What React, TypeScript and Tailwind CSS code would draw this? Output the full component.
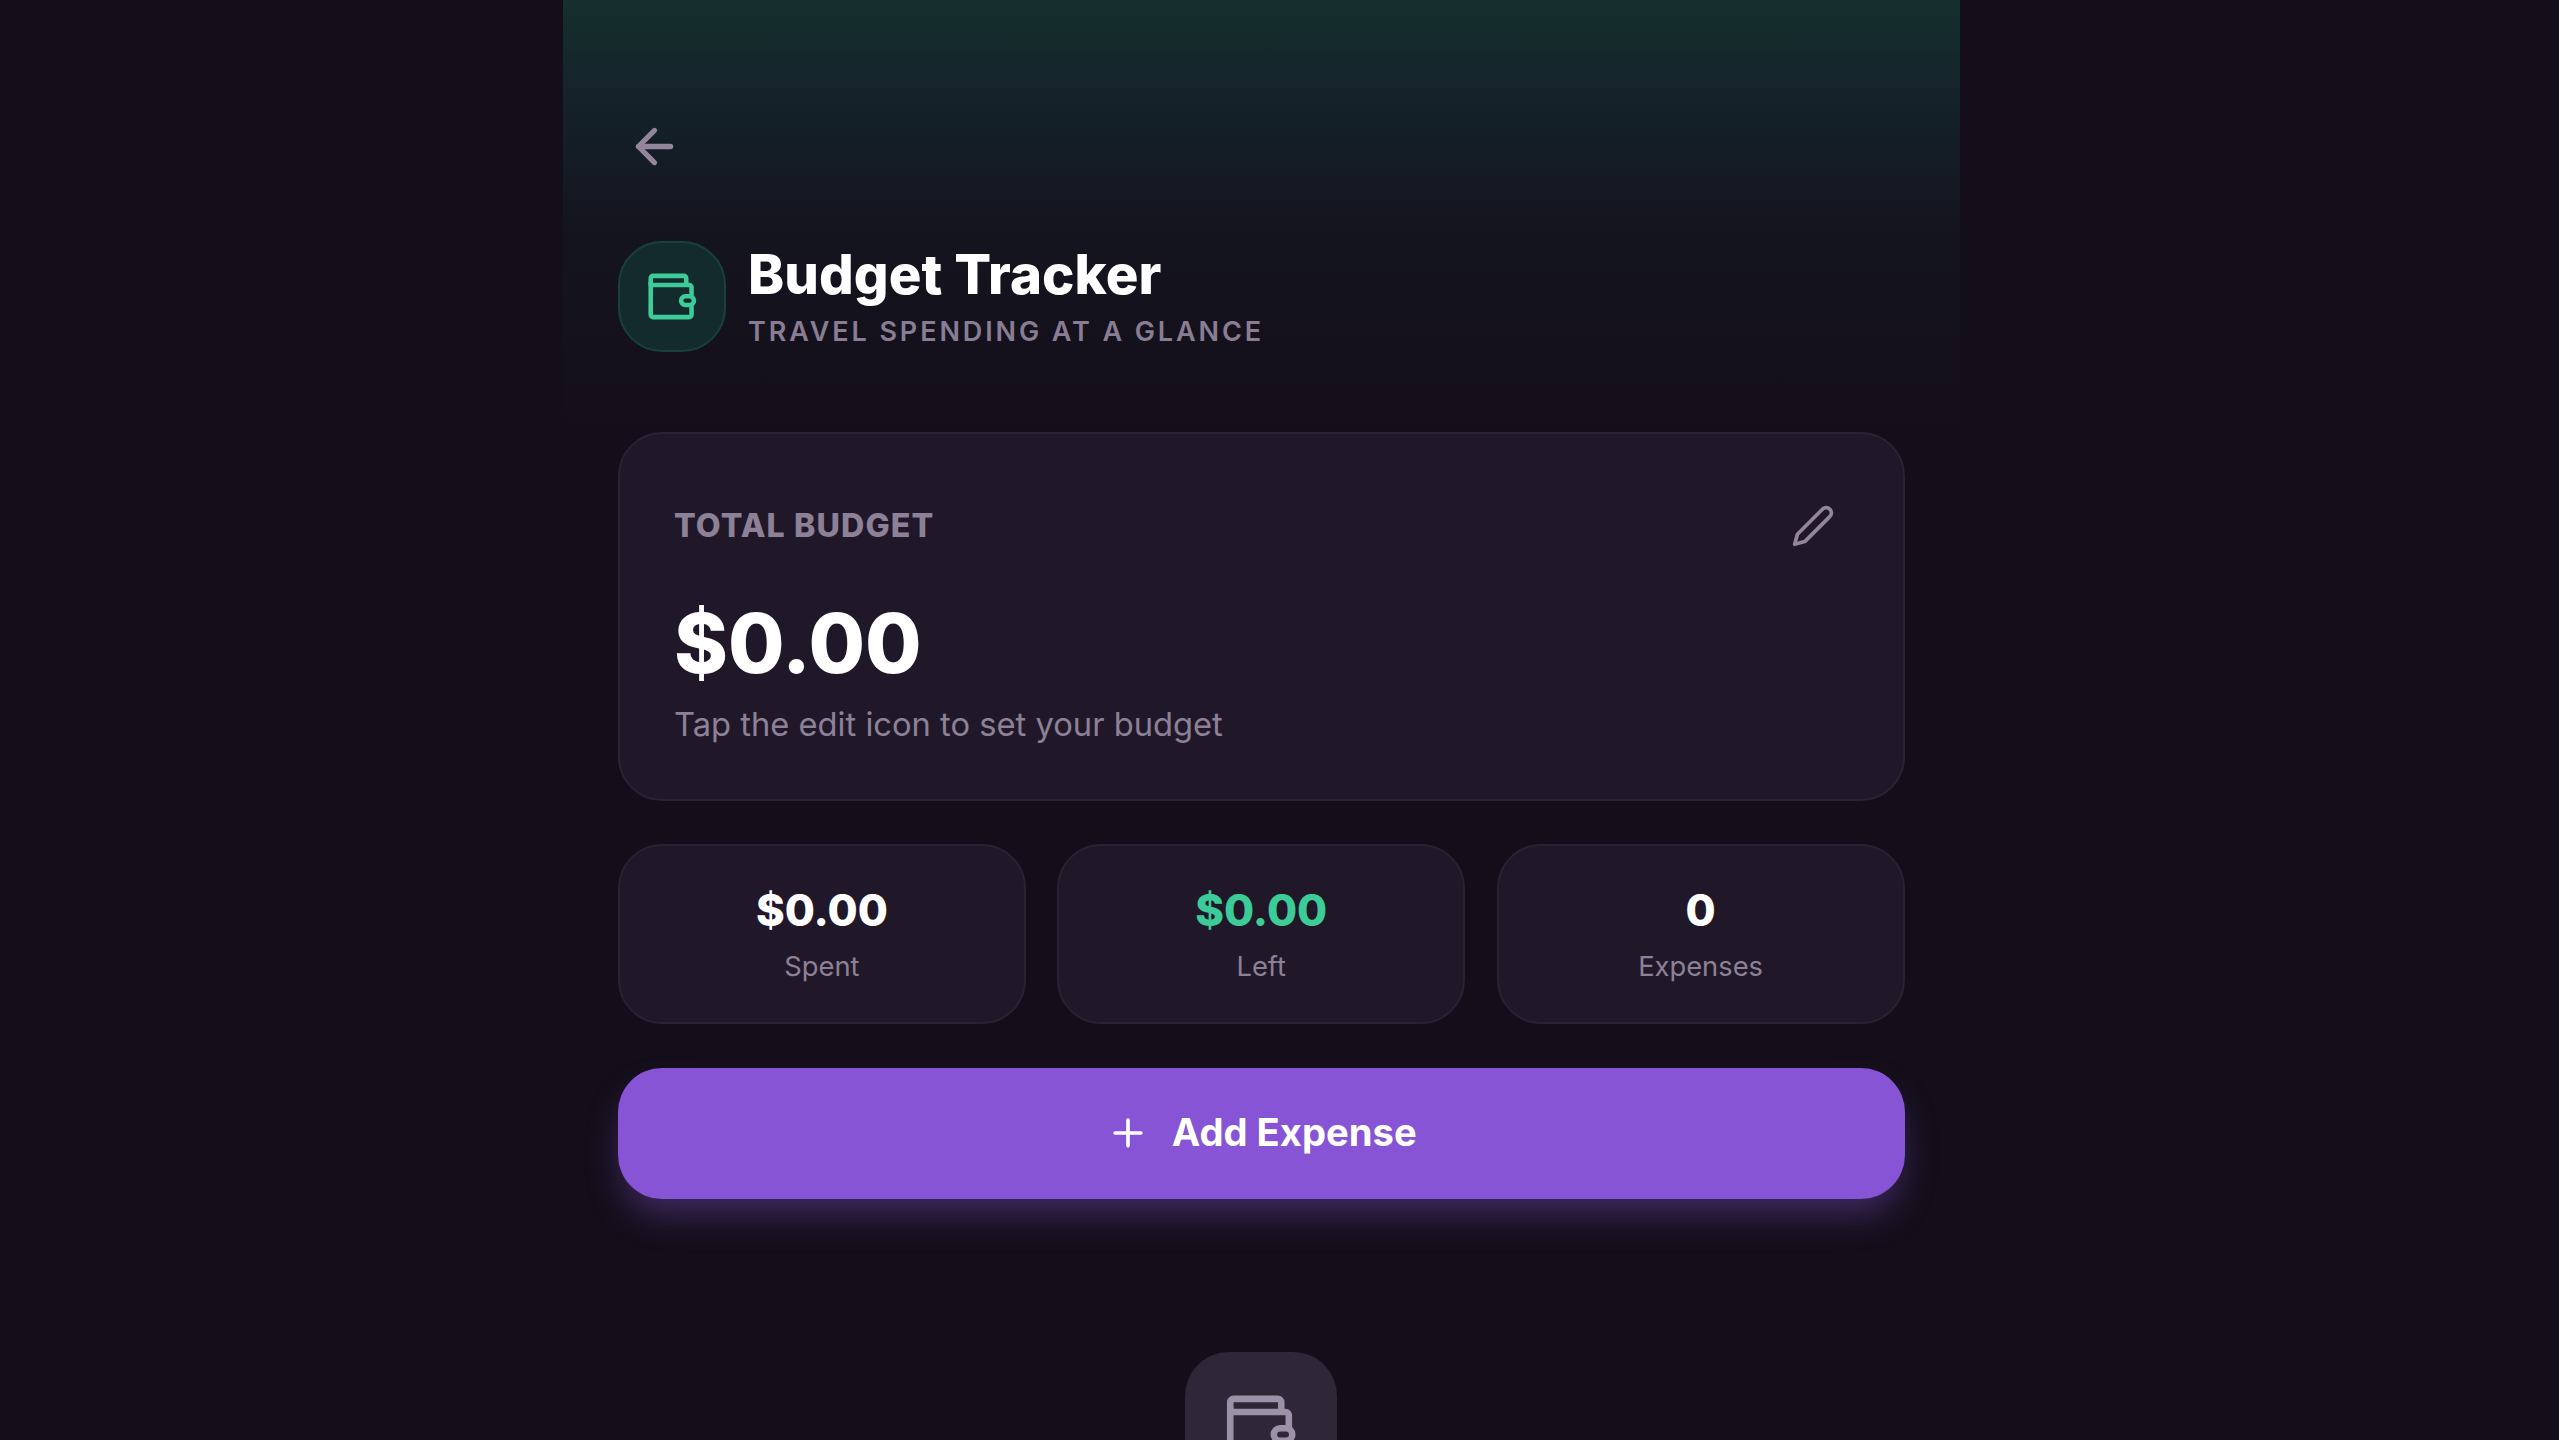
import React from 'react';
import { ArrowLeft, Plus } from 'lucide-react';

interface IconProps {
  className?: string;
}

interface Stat {
  label: string;
  value: string;
  color: string;
}

const stats: Stat[] = [
  { label: 'Spent', value: '$0.00', color: 'text-white' },
  { label: 'Left', value: '$0.00', color: 'text-[#3dcb98]' },
  { label: 'Expenses', value: '0', color: 'text-white' },
];

const WalletIcon: React.FC<IconProps> = ({ className }) => (
  <svg className={className} viewBox="0 0 24 24" fill="none" stroke="currentColor" strokeWidth="2" strokeLinecap="round" strokeLinejoin="round">
    <path d="M18 7V4a1 1 0 0 0-1-1H3.5a1 1 0 0 0-1 1v3h16.8a1 1 0 0 1 1 1v3.9" />
    <path d="M2.5 6v14a1 1 0 0 0 1 1h15.8a1 1 0 0 0 1-1v-4.3" />
    <rect x="15.75" y="11.9" width="5.6" height="3.8" rx="1.9" />
  </svg>
);

const PencilIcon: React.FC<IconProps> = ({ className }) => (
  <svg className={className} viewBox="0 0 24 24" fill="none" stroke="currentColor" strokeWidth="2" strokeLinecap="round" strokeLinejoin="round">
    <path d="M17 3a2.85 2.83 0 1 1 4 4L7.5 20.5 2 22l1.5-5.5Z" />
  </svg>
);

const App: React.FC = () => {
  return (
    <div className="h-screen w-full overflow-hidden bg-[#140e1a] font-['Inter',sans-serif] text-white">
      <div className="ml-[563px] w-[1396.5px] h-full px-[55px] bg-[linear-gradient(to_bottom,#14302d_0px,#14222a_100px,#14151f_220px,#140e1a_430px)]">
        {/* Header */}
        <header className="pt-[120px]">
          <button className="flex w-[73px] h-[52px] items-center justify-center text-[#92859c]">
            <ArrowLeft className="w-[55px] h-[55px]" strokeWidth={2.3} />
          </button>
          <div className="mt-[69px] flex items-center gap-[22px]">
            <div className="flex w-[108px] h-[111px] items-center justify-center rounded-[44px] border-2 border-[#1a403c] bg-[#132b2c]">
              <WalletIcon className="w-[55px] h-[55px] text-[#3dcb98]" />
            </div>
            <div className="pt-[2px]">
              <h1 className="text-[54.5px] leading-[60px] font-extrabold tracking-[0.05px]">Budget Tracker</h1>
              <p className="mt-[9px] text-[27px] leading-[38px] font-semibold uppercase tracking-[2.9px] text-[#897d94]">Travel spending at a glance</p>
            </div>
          </div>
        </header>

        {/* Budget card */}
        <section className="mt-[80px] h-[369px] rounded-[44px] border-2 border-[#2b2234] bg-[#201829] px-[54px] pt-[64px]">
          <div className="flex items-center justify-between">
            <h2 className="text-[32.2px] leading-[56px] font-extrabold uppercase tracking-[1.1px] text-[#8d8198]">Total Budget</h2>
            <button className="mr-[14px] text-[#92859c]">
              <PencilIcon className="w-[44px] h-[44px]" />
            </button>
          </div>
          <p className="mt-[46px] text-[81.8px] leading-[88px] font-extrabold">$0.00</p>
          <p className="mt-[12px] text-[32.7px] leading-[48px] text-[#8d8198]">Tap the edit icon to set your budget</p>
        </section>

        {/* Stats */}
        <section className="mt-[43px] grid grid-cols-3 gap-[31.5px]">
          {stats.map((stat) => (
            <div key={stat.label} className="flex h-[180px] flex-col items-center rounded-[44px] border-2 border-[#2a2132] bg-[#201829] pt-[38px]">
              <p className={`text-[43.6px] leading-[54px] font-extrabold ${stat.color}`}>{stat.value}</p>
              <p className="mt-[11px] text-[27.3px] leading-[36px] text-[#8d8198]">{stat.label}</p>
            </div>
          ))}
        </section>

        <button className="mt-[44px] flex h-[131px] w-full items-center justify-center gap-[22px] rounded-[44px] bg-[#8654d4] pb-px text-[38.2px] font-bold shadow-[0_20px_36px_-6px_rgba(134,84,212,0.4)]">
          <Plus className="w-[44px] h-[44px]" strokeWidth={2} />
          Add Expense
        </button>

        {/* Empty state */}
        <div className="mx-auto mt-[153px] flex w-[152px] h-[152px] items-center justify-center rounded-[44px] bg-[#2f2637]">
          <WalletIcon className="w-[79px] h-[79px] text-[#9d90a9]" />
        </div>
      </div>
    </div>
  );
};

export default App;
